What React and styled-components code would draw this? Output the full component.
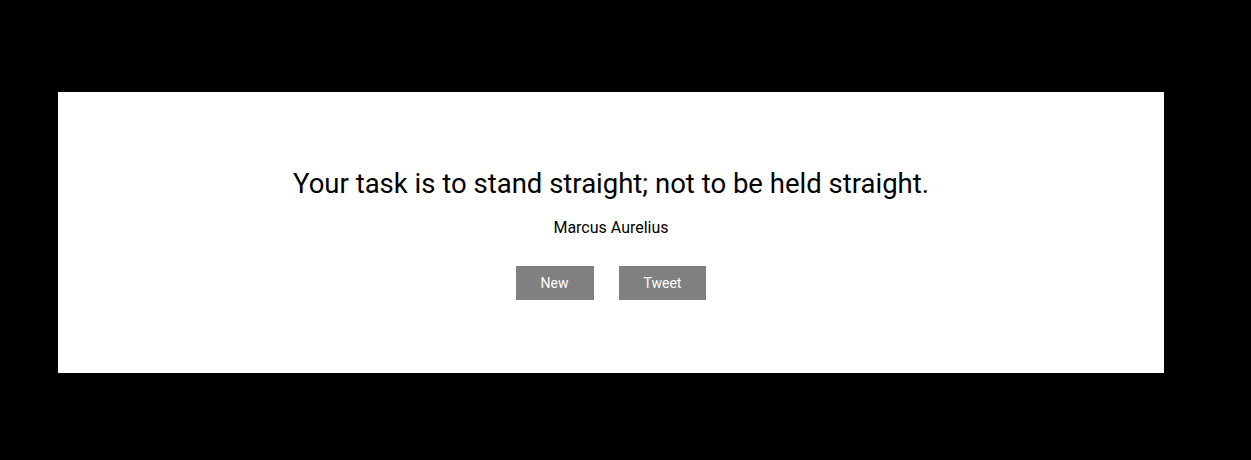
import React from 'react';
import styled, { createGlobalStyle } from 'styled-components';

const GlobalStyle = createGlobalStyle`
  html, body {
    margin: 0;
    padding: 0;
    background-color: #000;
  }
  body {
    font-family: Roboto, "Liberation Sans", sans-serif;
  }
`;

const Page = styled.div`
  width: 100%;
  height: 460px;
  padding: 92px 0 0 58px;
  box-sizing: border-box;
`;

const Card = styled.div`
  width: 1106px;
  height: 281px;
  box-sizing: border-box;
  padding-top: 76px;
  background-color: #fff;
  display: flex;
  flex-direction: column;
  align-items: center;
`;

const Quote = styled.h1`
  margin: 0;
  font-size: 27.5px;
  font-weight: 400;
  line-height: 32px;
  color: #000;
`;

const Author = styled.p`
  margin: 18px 0 0;
  font-size: 16px;
  line-height: 19px;
  color: #000;
`;

const Buttons = styled.div`
  display: flex;
  gap: 25px;
  margin-top: 29px;
`;

const Button = styled.button`
  height: 34px;
  padding: 0 25px;
  border: none;
  background-color: #808080;
  color: #fff;
  font-family: Roboto, "Liberation Sans", sans-serif;
  font-size: 14px;
  cursor: pointer;
`;

function App() {
  return (
    <>
      <GlobalStyle />
      <Page>
        <Card>
          <Quote>Your task is to stand straight; not to be held straight.</Quote>
          <Author>Marcus Aurelius</Author>
          <Buttons>
            <Button>New</Button>
            <Button>Tweet</Button>
          </Buttons>
        </Card>
      </Page>
    </>
  );
}

export default App;
